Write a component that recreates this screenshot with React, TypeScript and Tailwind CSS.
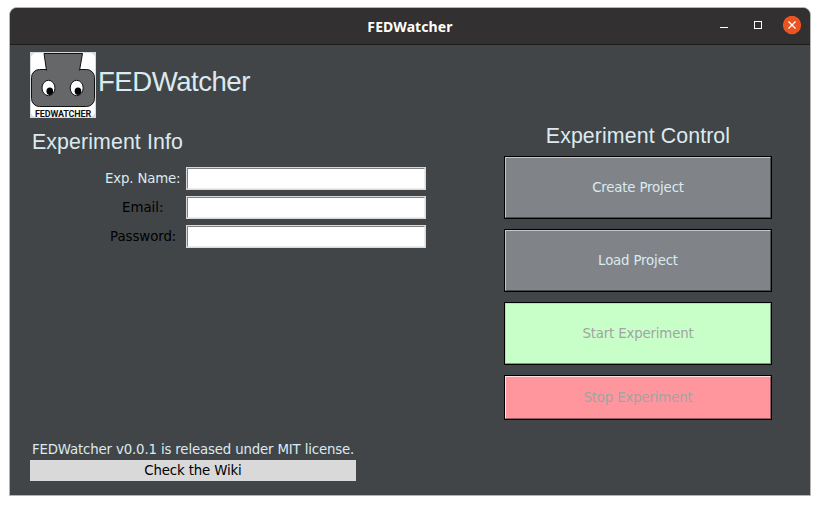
import type { ReactNode } from "react";

function Logo() {
  return (
    <svg width="66" height="66" viewBox="0 0 66 66" className="block shrink-0">
      <rect width="66" height="66" fill="#d9d9d9" />
      <rect x="1" y="1" width="64" height="64" rx="5" fill="#fff" />
      <rect x="1.5" y="17.5" width="63" height="37" rx="8" fill="#666769" stroke="#111" />
      <path d="M16.5 18.5 L14 1.5 H52.5 L49.5 18.5" fill="#666769" stroke="#111" />
      <ellipse cx="18.5" cy="36" rx="6.5" ry="7.7" fill="#fff" stroke="#111" />
      <ellipse cx="46.7" cy="36" rx="6.5" ry="7.7" fill="#fff" stroke="#111" />
      <ellipse cx="19.8" cy="39.3" rx="3.3" ry="3.7" fill="#000" />
      <ellipse cx="48" cy="39.3" rx="3.3" ry="3.7" fill="#000" />
      <text
        x="5"
        y="64.8"
        fontFamily="Roboto, 'Liberation Sans', sans-serif"
        fontSize="9.6"
        fontWeight="700"
        fill="#111"
        textLength="56"
        lengthAdjust="spacingAndGlyphs"
      >
        FEDWATCHER
      </text>
    </svg>
  );
}

function TitleBar() {
  return (
    <header className="grid h-[37px] grid-cols-[1fr_auto_1fr] items-center border-b border-[#1d1d1d] bg-[#323030]">
      <h1 className="col-start-2 pt-px font-['Noto_Sans',sans-serif] text-[14px] leading-[18px] font-bold tracking-[0.1px] text-white">
        FEDWatcher
      </h1>
      <div className="flex justify-end pr-[8px]">
        <svg width="92" height="20" viewBox="0 0 92 20" className="block">
          <rect x="10" y="11" width="8" height="1" fill="#fff" />
          <rect x="44.5" y="5.5" width="7" height="7" fill="none" stroke="#fff" />
          <circle cx="82" cy="9" r="9.2" fill="#e95420" />
          <path d="M78.5 5.5 l7 7 M85.5 5.5 l-7 7" stroke="#fff" strokeWidth="1.3" />
        </svg>
      </div>
    </header>
  );
}

function Field({ label, name, className }: { label: string; name: string; className: string }) {
  return (
    <label className="flex h-[23px] items-center">
      <span className={`w-[146px] shrink-0 whitespace-nowrap leading-[16px] ${className}`}>{label}</span>
      <span className="block h-[23px] w-[240px] border border-[#d9d9d9]">
        <input
          name={name}
          className="block h-[21px] w-[238px] border border-t-[#828282] border-r-[#ececec] border-b-[#ececec] border-l-[#828282] bg-white px-0.5 outline-none"
        />
      </span>
    </label>
  );
}

function ControlButton({ className, children }: { className: string; children: ReactNode }) {
  return (
    <div className="w-[268px] border border-black">
      <button className={`flex w-full items-center justify-center border tracking-[-0.17px] ${className}`}>
        {children}
      </button>
    </div>
  );
}

export default function App() {
  return (
    <div className="h-[505px] w-[820px] overflow-hidden bg-white pt-[7px] pl-[9px] font-['DejaVu_Sans',sans-serif] text-[13.33px] tracking-[-0.16px]">
      <div className="h-[489px] w-[802px] overflow-hidden rounded-t-[8px] border border-[#b4b4b4] bg-[#424547]">
        <TitleBar />
        <main className="flex h-[450px] justify-between pr-[38px] pl-[20px]">
          <section className="flex w-[400px] flex-col pt-[7px]">
            <div className="flex h-[66px]">
              <Logo />
              <h2 className="ml-[2px] pt-[14px] font-['Liberation_Sans',Arial,sans-serif] text-[27.6px] leading-[31px] tracking-[-0.5px] text-[#dbeaf0]">
                FEDWatcher
              </h2>
            </div>
            <h3 className="mt-[12px] ml-[2px] font-['Liberation_Sans',Arial,sans-serif] text-[21.33px] leading-[24px] tracking-[0.1px] text-[#dbeaf0]">
              Experiment Info
            </h3>
            <div className="mt-[13px] ml-[10px] flex flex-col gap-[6px]">
              <Field label="Exp. Name:" name="experiment" className="pl-[65px] text-[#dbeaf0]" />
              <Field label="Email:" name="email" className="pl-[82px] tracking-normal text-black" />
              <Field label="Password:" name="password" className="pl-[70px] tracking-[-0.05px] text-black" />
            </div>
            <footer className="mt-auto mb-[14px] w-[326px]">
              <p className="pl-[2px] leading-[20px] whitespace-nowrap text-[#dbeaf0]">
                FEDWatcher v0.0.1 is released under MIT license.
              </p>
              <button className="block h-[21px] w-full bg-[#d9d9d9] leading-[20px] tracking-[-0.15px] text-black">
                Check the Wiki
              </button>
            </footer>
          </section>
          <section className="flex w-[268px] flex-col pt-[79px]">
            <h3 className="mb-[8px] text-center font-['Liberation_Sans',Arial,sans-serif] text-[21.33px] leading-[24px] tracking-[0.1px] whitespace-nowrap text-[#dbeaf0]">
              Experiment Control
            </h3>
            <div className="flex flex-col gap-[10px]">
              <ControlButton className="h-[61px] border-t-[#c4c6c8] border-r-[#494b4d] border-b-[#494b4d] border-l-[#c4c6c8] bg-[#808488] text-[#dbeaf0]">
                Create Project
              </ControlButton>
              <ControlButton className="h-[61px] border-t-[#c4c6c8] border-r-[#494b4d] border-b-[#494b4d] border-l-[#c4c6c8] bg-[#808488] text-[#dbeaf0]">
                Load Project
              </ControlButton>
              <ControlButton className="h-[61px] border-t-[#b2e3b2] border-r-[#78997a] border-b-[#78997a] border-l-[#b2e3b2] bg-[#c8ffc8] text-[#a3a3a3]">
                Start Experiment
              </ControlButton>
              <ControlButton className="h-[43px] border-t-[#ffe0e3] border-r-[#99595f] border-b-[#99595f] border-l-[#ffe0e3] bg-[#ff969d] text-[#a3a3a3]">
                Stop Experiment
              </ControlButton>
            </div>
          </section>
        </main>
      </div>
    </div>
  );
}
